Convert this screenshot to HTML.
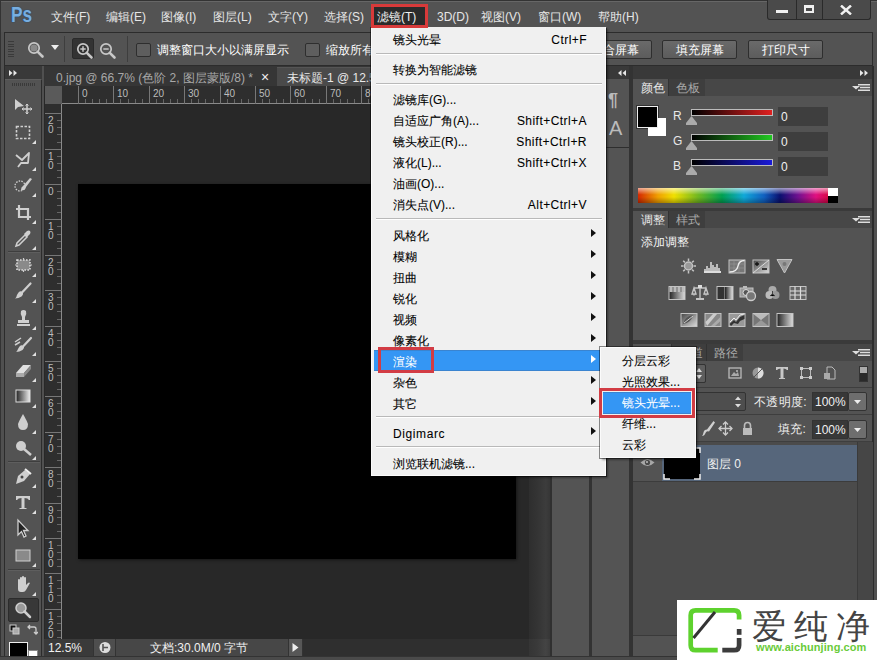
<!DOCTYPE html><html><head><meta charset="utf-8"><style>
*{margin:0;padding:0;box-sizing:border-box}
html,body{width:877px;height:660px;overflow:hidden;background:#3c3c3c}
body{position:relative;font-family:"Liberation Sans",sans-serif;font-size:12px;color:#ddd}
div{position:absolute}
.t{white-space:nowrap;line-height:14px}
.m{color:#1a1a1a;font-size:12px}
</style></head><body><div style="left:0px;top:0px;width:877px;height:660px;background:#505050;border-top:1px solid #333;border-left:1px solid #333"></div>
<div style="left:1px;top:1px;width:876px;height:31px;background:#535353;border-top:1px solid #666"></div>
<div class="t" style="left:11px;top:4px;font-size:22px;font-weight:bold;color:#78aee0;line-height:22px;transform:scaleX(0.78);transform-origin:0 0;text-shadow:0 0 1px #1d4a7a,0 0 1px #1d4a7a">Ps</div>
<div class="t" style="left:51px;top:10px;color:#e6e6e6">文件(F)</div>
<div class="t" style="left:106px;top:10px;color:#e6e6e6">编辑(E)</div>
<div class="t" style="left:161px;top:10px;color:#e6e6e6">图像(I)</div>
<div class="t" style="left:213px;top:10px;color:#e6e6e6">图层(L)</div>
<div class="t" style="left:268px;top:10px;color:#e6e6e6">文字(Y)</div>
<div class="t" style="left:324px;top:10px;color:#e6e6e6">选择(S)</div>
<div class="t" style="left:377px;top:10px;color:#e6e6e6">滤镜(T)</div>
<div class="t" style="left:437px;top:10px;color:#e6e6e6">3D(D)</div>
<div class="t" style="left:481px;top:10px;color:#e6e6e6">视图(V)</div>
<div class="t" style="left:538px;top:10px;color:#e6e6e6">窗口(W)</div>
<div class="t" style="left:598px;top:10px;color:#e6e6e6">帮助(H)</div>
<div style="left:767px;top:0px;width:104px;height:20px;background:#4a4a4a;border:1px solid #2a2a2a;border-top:none;border-radius:0 0 3px 3px"></div>
<div style="left:796px;top:0px;width:1px;height:20px;background:#2a2a2a"></div>
<div style="left:822px;top:0px;width:1px;height:20px;background:#2a2a2a"></div>
<div style="left:776px;top:10px;width:12px;height:3px;background:#f0f0f0"></div>
<div style="left:804px;top:5px;width:10px;height:8px;border:2px solid #f0f0f0;border-top-width:3px"></div>
<svg style="position:absolute;left:840px;top:5px" width="12" height="10" viewBox="0 0 12 10"><path d="M1 0.5L11 9.5M11 0.5L1 9.5" stroke="#f0f0f0" stroke-width="2.4"/></svg>
<div style="left:4px;top:32px;width:869px;height:34px;background:#535353;border:1px solid #2c2c2c"></div>
<div style="left:8px;top:41.0px;width:6px;height:1px;background:#3a3a3a"></div>
<div style="left:8px;top:43.5px;width:6px;height:1px;background:#3a3a3a"></div>
<div style="left:8px;top:46.0px;width:6px;height:1px;background:#3a3a3a"></div>
<div style="left:8px;top:48.5px;width:6px;height:1px;background:#3a3a3a"></div>
<div style="left:8px;top:51.0px;width:6px;height:1px;background:#3a3a3a"></div>
<div style="left:8px;top:53.5px;width:6px;height:1px;background:#3a3a3a"></div>
<div style="left:8px;top:56.0px;width:6px;height:1px;background:#3a3a3a"></div>
<svg style="position:absolute;left:27px;top:41px" width="20" height="20" viewBox="0 0 20 20"><circle cx="7" cy="7" r="5.2" fill="none" stroke="#c8c8c8" stroke-width="1.7"/><line x1="10.8" y1="10.8" x2="15.5" y2="15.5" stroke="#c8c8c8" stroke-width="2.6" stroke-linecap="round"/><circle cx="7" cy="7" r="3.6" fill="#8a8a8a"/></svg>
<svg style="position:absolute;left:51px;top:45px" width="8" height="6"><path d="M0 0H8L4 5Z" fill="#eee"/></svg>
<div style="left:64px;top:36px;width:1px;height:26px;background:#3e3e3e"></div>
<div style="left:72px;top:38px;width:22px;height:21px;background:#333;border:1px solid #2a2a2a;border-radius:2px"></div>
<svg style="position:absolute;left:76px;top:42px" width="20" height="20" viewBox="0 0 20 20"><circle cx="7" cy="7" r="5.2" fill="none" stroke="#c8c8c8" stroke-width="1.7"/><line x1="10.8" y1="10.8" x2="15.5" y2="15.5" stroke="#c8c8c8" stroke-width="2.6" stroke-linecap="round"/><line x1="4.3" y1="7" x2="9.7" y2="7" stroke="#c8c8c8" stroke-width="1.5"/><line x1="7" y1="4.3" x2="7" y2="9.7" stroke="#c8c8c8" stroke-width="1.5"/></svg>
<svg style="position:absolute;left:99px;top:42px" width="20" height="20" viewBox="0 0 20 20"><circle cx="7" cy="7" r="5.2" fill="none" stroke="#c8c8c8" stroke-width="1.7"/><line x1="10.8" y1="10.8" x2="15.5" y2="15.5" stroke="#c8c8c8" stroke-width="2.6" stroke-linecap="round"/><line x1="4.3" y1="7" x2="9.7" y2="7" stroke="#c8c8c8" stroke-width="1.5"/></svg>
<div style="left:127px;top:36px;width:1px;height:26px;background:#3e3e3e"></div>
<div style="left:136px;top:43px;width:15px;height:14px;background:#5e5e5e;border:1px solid #2e2e2e;border-radius:2px"></div>
<div class="t" style="left:157px;top:43px;color:#fff">调整窗口大小以满屏显示</div>
<div style="left:305px;top:43px;width:15px;height:14px;background:#5e5e5e;border:1px solid #2e2e2e;border-radius:2px"></div>
<div class="t" style="left:326px;top:43px;color:#fff">缩放所有窗口</div>
<div style="left:577px;top:40px;width:75px;height:19px;background:linear-gradient(#6a6a6a,#5c5c5c);border:1px solid #2e2e2e;border-radius:2px"></div>
<div class="t" style="left:591px;top:43px;color:#fff">适合屏幕</div>
<div style="left:662px;top:40px;width:75px;height:19px;background:linear-gradient(#6a6a6a,#5c5c5c);border:1px solid #2e2e2e;border-radius:2px"></div>
<div class="t" style="left:676px;top:43px;color:#fff">填充屏幕</div>
<div style="left:748px;top:40px;width:75px;height:19px;background:linear-gradient(#6a6a6a,#5c5c5c);border:1px solid #2e2e2e;border-radius:2px"></div>
<div class="t" style="left:762px;top:43px;color:#fff">打印尺寸</div>
<div style="left:5px;top:66px;width:37px;height:13px;background:#393939"></div>
<svg style="position:absolute;left:9px;top:70px" width="8" height="6" viewBox="0 0 8 6"><path d="M0 0L3.5 3L0 6ZM4.5 0L8 3L4.5 6Z" fill="#e8e8e8"/></svg>
<div style="left:5px;top:79px;width:37px;height:581px;background:#535353;border-right:1px solid #2c2c2c;border-top:1px solid #5e5e5e"></div>
<div style="left:4px;top:66px;width:1px;height:594px;background:#2c2c2c"></div>
<div style="left:12px;top:83px;width:24px;height:3px;background:repeating-linear-gradient(90deg,#3a3a3a 0 1px,transparent 1px 2px)"></div>
<svg style="position:absolute;left:13px;top:96px" width="20" height="20" viewBox="0 0 20 20"><path d="M2 3L2 14L5 11L11 10Z" fill="#cfcfcf"/><path d="M14 8V18M9 13H19" stroke="#cfcfcf" stroke-width="1.5"/><path d="M12.5 9.5L14 8L15.5 9.5M12.5 16.5L14 18L15.5 16.5M10.5 11.5L9 13L10.5 14.5M17.5 11.5L19 13L17.5 14.5" stroke="#cfcfcf" fill="none"/></svg>
<svg style="position:absolute;left:13px;top:122px" width="20" height="20" viewBox="0 0 20 20"><rect x="3.5" y="4.5" width="13" height="12" fill="none" stroke="#cfcfcf" stroke-width="1.6" stroke-dasharray="2.5 1.5"/></svg>
<svg style="position:absolute;left:32px;top:140px" width="4" height="4" viewBox="0 0 4 4"><path d="M4 0V4H0Z" fill="#e0e0e0"/></svg>
<svg style="position:absolute;left:13px;top:149px" width="20" height="20" viewBox="0 0 20 20"><path d="M3 6L9 11L16 4L15 14L8 14L5 18" fill="none" stroke="#cfcfcf" stroke-width="1.8" stroke-linejoin="round"/></svg>
<svg style="position:absolute;left:32px;top:167px" width="4" height="4" viewBox="0 0 4 4"><path d="M4 0V4H0Z" fill="#e0e0e0"/></svg>
<svg style="position:absolute;left:13px;top:175px" width="20" height="20" viewBox="0 0 20 20"><circle cx="7" cy="11" r="5" fill="none" stroke="#cfcfcf" stroke-width="1.3" stroke-dasharray="1.5 1.2"/><path d="M8 15Q12 16 13 12L19 4L17 3L10 11Q8 12 8 15Z" fill="#cfcfcf"/></svg>
<svg style="position:absolute;left:32px;top:193px" width="4" height="4" viewBox="0 0 4 4"><path d="M4 0V4H0Z" fill="#e0e0e0"/></svg>
<svg style="position:absolute;left:13px;top:202px" width="20" height="20" viewBox="0 0 20 20"><path d="M6 3V15H18M3 7H15V18" fill="none" stroke="#cfcfcf" stroke-width="2.2"/></svg>
<svg style="position:absolute;left:32px;top:220px" width="4" height="4" viewBox="0 0 4 4"><path d="M4 0V4H0Z" fill="#e0e0e0"/></svg>
<svg style="position:absolute;left:13px;top:228px" width="20" height="20" viewBox="0 0 20 20"><path d="M3 18L4 15L12 7L14 9L6 17Z" fill="none" stroke="#cfcfcf" stroke-width="1.5"/><path d="M11 6L14 3Q16 2 17 3Q18 4 17 6L14 9Z" fill="#cfcfcf"/></svg>
<svg style="position:absolute;left:32px;top:246px" width="4" height="4" viewBox="0 0 4 4"><path d="M4 0V4H0Z" fill="#e0e0e0"/></svg>
<div style="left:8px;top:251px;width:32px;height:1px;background:#3e3e3e"></div>
<div style="left:8px;top:252px;width:32px;height:1px;background:#5e5e5e"></div>
<svg style="position:absolute;left:13px;top:255px" width="20" height="20" viewBox="0 0 20 20"><rect x="4" y="5" width="13" height="10" rx="2" fill="#8a8a8a"/><path d="M4 5H17V15H4Z" fill="none" stroke="#ddd" stroke-width="1.6" stroke-dasharray="1.6 1.4"/><path d="M2 10H4M17 10H19M10.5 3V5M10.5 15V17" stroke="#ccc" stroke-width="1.2"/></svg>
<svg style="position:absolute;left:32px;top:273px" width="4" height="4" viewBox="0 0 4 4"><path d="M4 0V4H0Z" fill="#e0e0e0"/></svg>
<svg style="position:absolute;left:13px;top:281px" width="20" height="20" viewBox="0 0 20 20"><path d="M17.5 2.5L9.5 11" stroke="#cfcfcf" stroke-width="2.2" stroke-linecap="round"/><path d="M2 17.5Q5.5 17.5 8.5 15.5Q11 13 9.5 11Q7.5 9.5 5.5 11.5Q4 13.5 3.5 15.5Q3 17 2 17.5Z" fill="#cfcfcf"/></svg>
<svg style="position:absolute;left:32px;top:299px" width="4" height="4" viewBox="0 0 4 4"><path d="M4 0V4H0Z" fill="#e0e0e0"/></svg>
<svg style="position:absolute;left:13px;top:308px" width="20" height="20" viewBox="0 0 20 20"><path d="M8 3Q10.5 1 13 3Q14 6 12 9V12H16V15H5V12H9V9Q7 6 8 3Z" fill="#cfcfcf"/><rect x="4" y="16" width="13" height="2" fill="#cfcfcf"/></svg>
<svg style="position:absolute;left:32px;top:326px" width="4" height="4" viewBox="0 0 4 4"><path d="M4 0V4H0Z" fill="#e0e0e0"/></svg>
<svg style="position:absolute;left:13px;top:334px" width="20" height="20" viewBox="0 0 20 20"><path d="M2 8L8 4M2 11L7 8" stroke="#cfcfcf" stroke-width="1.5"/><path d="M18 4L10.5 12" stroke="#cfcfcf" stroke-width="2.2" stroke-linecap="round"/><path d="M3 18Q6.5 18 9.5 16Q12 13.5 10.5 12Q8.5 10.5 6.5 12.5Q5 14.5 4.5 16Q4 17.5 3 18Z" fill="#cfcfcf"/></svg>
<svg style="position:absolute;left:32px;top:352px" width="4" height="4" viewBox="0 0 4 4"><path d="M4 0V4H0Z" fill="#e0e0e0"/></svg>
<svg style="position:absolute;left:13px;top:360px" width="20" height="20" viewBox="0 0 20 20"><path d="M3 13L10 5H18L11 13Z" fill="#e0e0e0"/><path d="M3 13H11V17H3Z" fill="#aaa"/><path d="M11 13L18 5V9L11 17Z" fill="#888"/></svg>
<svg style="position:absolute;left:32px;top:378px" width="4" height="4" viewBox="0 0 4 4"><path d="M4 0V4H0Z" fill="#e0e0e0"/></svg>
<svg style="position:absolute;left:13px;top:386px" width="20" height="20" viewBox="0 0 20 20"><rect x="3" y="4" width="14" height="12" fill="url(#gr)" stroke="#ddd" stroke-width="1"/><defs><linearGradient id="gr"><stop offset="0" stop-color="#222"/><stop offset="1" stop-color="#eee"/></linearGradient></defs></svg>
<svg style="position:absolute;left:32px;top:404px" width="4" height="4" viewBox="0 0 4 4"><path d="M4 0V4H0Z" fill="#e0e0e0"/></svg>
<svg style="position:absolute;left:13px;top:412px" width="20" height="20" viewBox="0 0 20 20"><path d="M10 2Q14 9 15 12Q15 18 10 18Q5 18 5 12Q6 9 10 2Z" fill="#cfcfcf"/></svg>
<svg style="position:absolute;left:32px;top:430px" width="4" height="4" viewBox="0 0 4 4"><path d="M4 0V4H0Z" fill="#e0e0e0"/></svg>
<svg style="position:absolute;left:13px;top:438px" width="20" height="20" viewBox="0 0 20 20"><circle cx="8" cy="8" r="5" fill="#cfcfcf"/><path d="M11 11L18 17" stroke="#cfcfcf" stroke-width="2.5"/></svg>
<svg style="position:absolute;left:32px;top:456px" width="4" height="4" viewBox="0 0 4 4"><path d="M4 0V4H0Z" fill="#e0e0e0"/></svg>
<div style="left:8px;top:461px;width:32px;height:1px;background:#3e3e3e"></div>
<div style="left:8px;top:462px;width:32px;height:1px;background:#5e5e5e"></div>
<svg style="position:absolute;left:13px;top:466px" width="20" height="20" viewBox="0 0 20 20"><path d="M3 18L5 10L12 4L17 8L11 15Z" fill="#cfcfcf"/><circle cx="9" cy="11" r="1.5" fill="#444"/><path d="M12 3L18 8" stroke="#eee" stroke-width="2"/></svg>
<svg style="position:absolute;left:32px;top:484px" width="4" height="4" viewBox="0 0 4 4"><path d="M4 0V4H0Z" fill="#e0e0e0"/></svg>
<svg style="position:absolute;left:13px;top:492px" width="20" height="20" viewBox="0 0 20 20"><path d="M3 4H17V8H16Q15 6 11.5 6V16H13.5V17H6.5V16H8.5V6Q5 6 4 8H3Z" fill="#cfcfcf"/></svg>
<svg style="position:absolute;left:32px;top:510px" width="4" height="4" viewBox="0 0 4 4"><path d="M4 0V4H0Z" fill="#e0e0e0"/></svg>
<svg style="position:absolute;left:13px;top:518px" width="20" height="20" viewBox="0 0 20 20"><path d="M5 2V17L8.5 13.5L11 19L13 18L10.5 12.5H15Z" fill="#222" stroke="#cfcfcf" stroke-width="1.3"/></svg>
<svg style="position:absolute;left:32px;top:536px" width="4" height="4" viewBox="0 0 4 4"><path d="M4 0V4H0Z" fill="#e0e0e0"/></svg>
<svg style="position:absolute;left:13px;top:545px" width="20" height="20" viewBox="0 0 20 20"><rect x="3" y="5" width="14" height="11" fill="#8a8a8a" stroke="#cfcfcf" stroke-width="1"/></svg>
<svg style="position:absolute;left:32px;top:563px" width="4" height="4" viewBox="0 0 4 4"><path d="M4 0V4H0Z" fill="#e0e0e0"/></svg>
<div style="left:8px;top:569px;width:32px;height:1px;background:#3e3e3e"></div>
<div style="left:8px;top:570px;width:32px;height:1px;background:#5e5e5e"></div>
<svg style="position:absolute;left:13px;top:574px" width="20" height="20" viewBox="0 0 20 20"><path d="M5 11V6Q5 5 6 5Q7 5 7 6V10V4Q7 3 8 3Q9 3 9 4V10V3Q9 2 10 2Q11 2 11 3V10V4Q11 3 12 3Q13 3 13 4V11L15 9Q16 8 17 9L13 16Q12 18 10 18H8Q5 18 5 15Z" fill="#cfcfcf"/></svg>
<svg style="position:absolute;left:32px;top:592px" width="4" height="4" viewBox="0 0 4 4"><path d="M4 0V4H0Z" fill="#e0e0e0"/></svg>
<div style="left:8px;top:598px;width:31px;height:24px;background:#383838;border:1px solid #2c2c2c;border-radius:2px"></div>
<svg style="position:absolute;left:13px;top:600px" width="20" height="20" viewBox="0 0 20 20"><circle cx="8" cy="8" r="5" fill="#999" stroke="#cfcfcf" stroke-width="1.5"/><path d="M11.5 11.5L17 17" stroke="#cfcfcf" stroke-width="2.5" stroke-linecap="round"/></svg>
<svg style="position:absolute;left:9px;top:624px" width="12" height="12" viewBox="0 0 12 12"><rect x="1" y="1" width="6" height="6" fill="#111" stroke="#ccc"/><rect x="4" y="4" width="6" height="6" fill="#aaa" stroke="#ccc"/></svg>
<svg style="position:absolute;left:26px;top:624px" width="12" height="12" viewBox="0 0 12 12"><path d="M2 3H8Q10 3 10 5V10M8 8L10 10L12 8M4 1L2 3L4 5" fill="none" stroke="#ccc" stroke-width="1.3"/></svg>
<div style="left:28px;top:650px;width:10px;height:10px;background:#fff;border:1px solid #888"></div>
<div style="left:9px;top:642px;width:19px;height:18px;background:#000;border:1px solid #eee"></div>
<div style="left:44px;top:66px;width:562px;height:594px;background:#282828"></div>
<div style="left:44px;top:66px;width:562px;height:20px;background:#353535"></div>
<div style="left:45px;top:67px;width:232px;height:19px;background:#363636"></div>
<div class="t" style="left:56px;top:71px;color:#a8a8a8">0.jpg @ 66.7% (色阶 2, 图层蒙版/8) *</div>
<div class="t" style="left:261px;top:70px;color:#f0f0f0;font-size:14px">×</div>
<div style="left:277px;top:67px;width:329px;height:19px;background:#4a4a4a;border-top:1px solid #555"></div>
<div class="t" style="left:287px;top:71px;color:#e8e8e8">未标题-1 @ 12.5%</div>
<div style="left:45px;top:86px;width:17px;height:18px;background:#5a5a5a"></div>
<div style="left:62px;top:86px;width:544px;height:18px;background:#2e2e2e;border-bottom:1px solid #8a8a8a"></div>
<div style="left:45px;top:104px;width:17px;height:535px;background:#2e2e2e;border-right:1px solid #8a8a8a"></div>
<div style="left:78px;top:86px;width:1px;height:18px;background:#777"></div>
<div class="t" style="left:82px;top:89px;font-size:10px;color:#bcbcbc;line-height:9px">0</div>
<div style="left:85px;top:99px;width:1px;height:4px;background:#666"></div>
<div style="left:92px;top:99px;width:1px;height:4px;background:#666"></div>
<div style="left:99px;top:99px;width:1px;height:4px;background:#666"></div>
<div style="left:106px;top:99px;width:1px;height:4px;background:#666"></div>
<div style="left:113px;top:86px;width:1px;height:18px;background:#777"></div>
<div class="t" style="left:117px;top:89px;font-size:10px;color:#bcbcbc;line-height:9px">10</div>
<div style="left:120px;top:99px;width:1px;height:4px;background:#666"></div>
<div style="left:128px;top:99px;width:1px;height:4px;background:#666"></div>
<div style="left:135px;top:99px;width:1px;height:4px;background:#666"></div>
<div style="left:142px;top:99px;width:1px;height:4px;background:#666"></div>
<div style="left:149px;top:86px;width:1px;height:18px;background:#777"></div>
<div class="t" style="left:153px;top:89px;font-size:10px;color:#bcbcbc;line-height:9px">20</div>
<div style="left:156px;top:99px;width:1px;height:4px;background:#666"></div>
<div style="left:163px;top:99px;width:1px;height:4px;background:#666"></div>
<div style="left:170px;top:99px;width:1px;height:4px;background:#666"></div>
<div style="left:177px;top:99px;width:1px;height:4px;background:#666"></div>
<div style="left:184px;top:86px;width:1px;height:18px;background:#777"></div>
<div class="t" style="left:188px;top:89px;font-size:10px;color:#bcbcbc;line-height:9px">30</div>
<div style="left:191px;top:99px;width:1px;height:4px;background:#666"></div>
<div style="left:198px;top:99px;width:1px;height:4px;background:#666"></div>
<div style="left:205px;top:99px;width:1px;height:4px;background:#666"></div>
<div style="left:213px;top:99px;width:1px;height:4px;background:#666"></div>
<div style="left:220px;top:86px;width:1px;height:18px;background:#777"></div>
<div class="t" style="left:224px;top:89px;font-size:10px;color:#bcbcbc;line-height:9px">40</div>
<div style="left:227px;top:99px;width:1px;height:4px;background:#666"></div>
<div style="left:234px;top:99px;width:1px;height:4px;background:#666"></div>
<div style="left:241px;top:99px;width:1px;height:4px;background:#666"></div>
<div style="left:248px;top:99px;width:1px;height:4px;background:#666"></div>
<div style="left:255px;top:86px;width:1px;height:18px;background:#777"></div>
<div class="t" style="left:259px;top:89px;font-size:10px;color:#bcbcbc;line-height:9px">50</div>
<div style="left:262px;top:99px;width:1px;height:4px;background:#666"></div>
<div style="left:269px;top:99px;width:1px;height:4px;background:#666"></div>
<div style="left:276px;top:99px;width:1px;height:4px;background:#666"></div>
<div style="left:283px;top:99px;width:1px;height:4px;background:#666"></div>
<div style="left:290px;top:86px;width:1px;height:18px;background:#777"></div>
<div class="t" style="left:294px;top:89px;font-size:10px;color:#bcbcbc;line-height:9px">60</div>
<div style="left:297px;top:99px;width:1px;height:4px;background:#666"></div>
<div style="left:305px;top:99px;width:1px;height:4px;background:#666"></div>
<div style="left:312px;top:99px;width:1px;height:4px;background:#666"></div>
<div style="left:319px;top:99px;width:1px;height:4px;background:#666"></div>
<div style="left:326px;top:86px;width:1px;height:18px;background:#777"></div>
<div class="t" style="left:330px;top:89px;font-size:10px;color:#bcbcbc;line-height:9px">70</div>
<div style="left:333px;top:99px;width:1px;height:4px;background:#666"></div>
<div style="left:340px;top:99px;width:1px;height:4px;background:#666"></div>
<div style="left:347px;top:99px;width:1px;height:4px;background:#666"></div>
<div style="left:354px;top:99px;width:1px;height:4px;background:#666"></div>
<div style="left:361px;top:86px;width:1px;height:18px;background:#777"></div>
<div class="t" style="left:365px;top:89px;font-size:10px;color:#bcbcbc;line-height:9px">80</div>
<div style="left:368px;top:99px;width:1px;height:4px;background:#666"></div>
<div style="left:375px;top:99px;width:1px;height:4px;background:#666"></div>
<div style="left:382px;top:99px;width:1px;height:4px;background:#666"></div>
<div style="left:390px;top:99px;width:1px;height:4px;background:#666"></div>
<div style="left:397px;top:86px;width:1px;height:18px;background:#777"></div>
<div class="t" style="left:401px;top:89px;font-size:10px;color:#bcbcbc;line-height:9px">90</div>
<div style="left:404px;top:99px;width:1px;height:4px;background:#666"></div>
<div style="left:411px;top:99px;width:1px;height:4px;background:#666"></div>
<div style="left:418px;top:99px;width:1px;height:4px;background:#666"></div>
<div style="left:425px;top:99px;width:1px;height:4px;background:#666"></div>
<div style="left:432px;top:86px;width:1px;height:18px;background:#777"></div>
<div class="t" style="left:436px;top:89px;font-size:10px;color:#bcbcbc;line-height:9px">100</div>
<div style="left:439px;top:99px;width:1px;height:4px;background:#666"></div>
<div style="left:446px;top:99px;width:1px;height:4px;background:#666"></div>
<div style="left:453px;top:99px;width:1px;height:4px;background:#666"></div>
<div style="left:460px;top:99px;width:1px;height:4px;background:#666"></div>
<div style="left:467px;top:86px;width:1px;height:18px;background:#777"></div>
<div class="t" style="left:471px;top:89px;font-size:10px;color:#bcbcbc;line-height:9px">110</div>
<div style="left:474px;top:99px;width:1px;height:4px;background:#666"></div>
<div style="left:482px;top:99px;width:1px;height:4px;background:#666"></div>
<div style="left:489px;top:99px;width:1px;height:4px;background:#666"></div>
<div style="left:496px;top:99px;width:1px;height:4px;background:#666"></div>
<div style="left:503px;top:86px;width:1px;height:18px;background:#777"></div>
<div class="t" style="left:507px;top:89px;font-size:10px;color:#bcbcbc;line-height:9px">120</div>
<div style="left:510px;top:99px;width:1px;height:4px;background:#666"></div>
<div style="left:517px;top:99px;width:1px;height:4px;background:#666"></div>
<div style="left:524px;top:99px;width:1px;height:4px;background:#666"></div>
<div style="left:531px;top:99px;width:1px;height:4px;background:#666"></div>
<div style="left:538px;top:86px;width:1px;height:18px;background:#777"></div>
<div class="t" style="left:542px;top:89px;font-size:10px;color:#bcbcbc;line-height:9px">130</div>
<div style="left:545px;top:99px;width:1px;height:4px;background:#666"></div>
<div style="left:552px;top:99px;width:1px;height:4px;background:#666"></div>
<div style="left:559px;top:99px;width:1px;height:4px;background:#666"></div>
<div style="left:567px;top:99px;width:1px;height:4px;background:#666"></div>
<div style="left:574px;top:86px;width:1px;height:18px;background:#777"></div>
<div class="t" style="left:578px;top:89px;font-size:10px;color:#bcbcbc;line-height:9px">140</div>
<div style="left:581px;top:99px;width:1px;height:4px;background:#666"></div>
<div style="left:588px;top:99px;width:1px;height:4px;background:#666"></div>
<div style="left:595px;top:99px;width:1px;height:4px;background:#666"></div>
<div style="left:602px;top:99px;width:1px;height:4px;background:#666"></div>
<div style="left:45px;top:113px;width:17px;height:1px;background:#777"></div>
<div class="t" style="left:48px;top:116px;font-size:10px;color:#bcbcbc;line-height:9px">2<br>0</div>
<div style="left:57px;top:120px;width:4px;height:1px;background:#666"></div>
<div style="left:57px;top:127px;width:4px;height:1px;background:#666"></div>
<div style="left:57px;top:134px;width:4px;height:1px;background:#666"></div>
<div style="left:57px;top:142px;width:4px;height:1px;background:#666"></div>
<div style="left:45px;top:149px;width:17px;height:1px;background:#777"></div>
<div class="t" style="left:48px;top:152px;font-size:10px;color:#bcbcbc;line-height:9px">1<br>0</div>
<div style="left:57px;top:156px;width:4px;height:1px;background:#666"></div>
<div style="left:57px;top:163px;width:4px;height:1px;background:#666"></div>
<div style="left:57px;top:170px;width:4px;height:1px;background:#666"></div>
<div style="left:57px;top:177px;width:4px;height:1px;background:#666"></div>
<div style="left:45px;top:184px;width:17px;height:1px;background:#777"></div>
<div class="t" style="left:48px;top:187px;font-size:10px;color:#bcbcbc;line-height:9px">0</div>
<div style="left:57px;top:191px;width:4px;height:1px;background:#666"></div>
<div style="left:57px;top:198px;width:4px;height:1px;background:#666"></div>
<div style="left:57px;top:205px;width:4px;height:1px;background:#666"></div>
<div style="left:57px;top:212px;width:4px;height:1px;background:#666"></div>
<div style="left:45px;top:219px;width:17px;height:1px;background:#777"></div>
<div class="t" style="left:48px;top:222px;font-size:10px;color:#bcbcbc;line-height:9px">1<br>0</div>
<div style="left:57px;top:226px;width:4px;height:1px;background:#666"></div>
<div style="left:57px;top:234px;width:4px;height:1px;background:#666"></div>
<div style="left:57px;top:241px;width:4px;height:1px;background:#666"></div>
<div style="left:57px;top:248px;width:4px;height:1px;background:#666"></div>
<div style="left:45px;top:255px;width:17px;height:1px;background:#777"></div>
<div class="t" style="left:48px;top:258px;font-size:10px;color:#bcbcbc;line-height:9px">2<br>0</div>
<div style="left:57px;top:262px;width:4px;height:1px;background:#666"></div>
<div style="left:57px;top:269px;width:4px;height:1px;background:#666"></div>
<div style="left:57px;top:276px;width:4px;height:1px;background:#666"></div>
<div style="left:57px;top:283px;width:4px;height:1px;background:#666"></div>
<div style="left:45px;top:290px;width:17px;height:1px;background:#777"></div>
<div class="t" style="left:48px;top:293px;font-size:10px;color:#bcbcbc;line-height:9px">3<br>0</div>
<div style="left:57px;top:297px;width:4px;height:1px;background:#666"></div>
<div style="left:57px;top:304px;width:4px;height:1px;background:#666"></div>
<div style="left:57px;top:311px;width:4px;height:1px;background:#666"></div>
<div style="left:57px;top:319px;width:4px;height:1px;background:#666"></div>
<div style="left:45px;top:326px;width:17px;height:1px;background:#777"></div>
<div class="t" style="left:48px;top:329px;font-size:10px;color:#bcbcbc;line-height:9px">4<br>0</div>
<div style="left:57px;top:333px;width:4px;height:1px;background:#666"></div>
<div style="left:57px;top:340px;width:4px;height:1px;background:#666"></div>
<div style="left:57px;top:347px;width:4px;height:1px;background:#666"></div>
<div style="left:57px;top:354px;width:4px;height:1px;background:#666"></div>
<div style="left:45px;top:361px;width:17px;height:1px;background:#777"></div>
<div class="t" style="left:48px;top:364px;font-size:10px;color:#bcbcbc;line-height:9px">5<br>0</div>
<div style="left:57px;top:368px;width:4px;height:1px;background:#666"></div>
<div style="left:57px;top:375px;width:4px;height:1px;background:#666"></div>
<div style="left:57px;top:382px;width:4px;height:1px;background:#666"></div>
<div style="left:57px;top:389px;width:4px;height:1px;background:#666"></div>
<div style="left:45px;top:396px;width:17px;height:1px;background:#777"></div>
<div class="t" style="left:48px;top:399px;font-size:10px;color:#bcbcbc;line-height:9px">6<br>0</div>
<div style="left:57px;top:403px;width:4px;height:1px;background:#666"></div>
<div style="left:57px;top:411px;width:4px;height:1px;background:#666"></div>
<div style="left:57px;top:418px;width:4px;height:1px;background:#666"></div>
<div style="left:57px;top:425px;width:4px;height:1px;background:#666"></div>
<div style="left:45px;top:432px;width:17px;height:1px;background:#777"></div>
<div class="t" style="left:48px;top:435px;font-size:10px;color:#bcbcbc;line-height:9px">7<br>0</div>
<div style="left:57px;top:439px;width:4px;height:1px;background:#666"></div>
<div style="left:57px;top:446px;width:4px;height:1px;background:#666"></div>
<div style="left:57px;top:453px;width:4px;height:1px;background:#666"></div>
<div style="left:57px;top:460px;width:4px;height:1px;background:#666"></div>
<div style="left:45px;top:467px;width:17px;height:1px;background:#777"></div>
<div class="t" style="left:48px;top:470px;font-size:10px;color:#bcbcbc;line-height:9px">8<br>0</div>
<div style="left:57px;top:474px;width:4px;height:1px;background:#666"></div>
<div style="left:57px;top:481px;width:4px;height:1px;background:#666"></div>
<div style="left:57px;top:488px;width:4px;height:1px;background:#666"></div>
<div style="left:57px;top:496px;width:4px;height:1px;background:#666"></div>
<div style="left:45px;top:503px;width:17px;height:1px;background:#777"></div>
<div class="t" style="left:48px;top:506px;font-size:10px;color:#bcbcbc;line-height:9px">9<br>0</div>
<div style="left:57px;top:510px;width:4px;height:1px;background:#666"></div>
<div style="left:57px;top:517px;width:4px;height:1px;background:#666"></div>
<div style="left:57px;top:524px;width:4px;height:1px;background:#666"></div>
<div style="left:57px;top:531px;width:4px;height:1px;background:#666"></div>
<div style="left:45px;top:538px;width:17px;height:1px;background:#777"></div>
<div class="t" style="left:48px;top:541px;font-size:10px;color:#bcbcbc;line-height:9px">1<br>0<br>0</div>
<div style="left:57px;top:545px;width:4px;height:1px;background:#666"></div>
<div style="left:57px;top:552px;width:4px;height:1px;background:#666"></div>
<div style="left:57px;top:559px;width:4px;height:1px;background:#666"></div>
<div style="left:57px;top:566px;width:4px;height:1px;background:#666"></div>
<div style="left:45px;top:573px;width:17px;height:1px;background:#777"></div>
<div class="t" style="left:48px;top:576px;font-size:10px;color:#bcbcbc;line-height:9px">1<br>1<br>0</div>
<div style="left:57px;top:580px;width:4px;height:1px;background:#666"></div>
<div style="left:57px;top:588px;width:4px;height:1px;background:#666"></div>
<div style="left:57px;top:595px;width:4px;height:1px;background:#666"></div>
<div style="left:57px;top:602px;width:4px;height:1px;background:#666"></div>
<div style="left:45px;top:609px;width:17px;height:1px;background:#777"></div>
<div class="t" style="left:48px;top:612px;font-size:10px;color:#bcbcbc;line-height:9px">1<br>2<br>0</div>
<div style="left:57px;top:616px;width:4px;height:1px;background:#666"></div>
<div style="left:57px;top:623px;width:4px;height:1px;background:#666"></div>
<div style="left:57px;top:630px;width:4px;height:1px;background:#666"></div>
<div style="left:57px;top:637px;width:4px;height:1px;background:#666"></div>
<div style="left:78px;top:184px;width:438px;height:375px;background:#000;box-shadow:1px 1px 3px rgba(0,0,0,.5)"></div>
<div style="left:529px;top:104px;width:21px;height:552px;background:linear-gradient(90deg,#2e2e2e,#343434 40%,#3c3c3c 80%,#363636)"></div>
<div style="left:44px;top:639px;width:486px;height:17px;background:#2f2f2f"></div>
<div style="left:529px;top:639px;width:21px;height:17px;background:linear-gradient(90deg,#353535,#3a3a3a 40%,#444 80%,#3c3c3c)"></div>
<div style="left:44px;top:639px;width:49px;height:17px;background:#3a3a3a"></div>
<div class="t" style="left:48px;top:641px;color:#f0f0f0">12.5%</div>
<div style="left:93px;top:639px;width:23px;height:17px;background:#4e4e4e;border-left:1px solid #333;border-right:1px solid #333"></div>
<svg style="position:absolute;left:98px;top:641px" width="14" height="13" viewBox="0 0 14 13"><circle cx="7" cy="6.5" r="5.5" fill="#ddd"/><path d="M5 3V10M5 6.5H10" stroke="#555" stroke-width="1.6"/></svg>
<div style="left:116px;top:639px;width:172px;height:17px;background:#474747"></div>
<div class="t" style="left:150px;top:641px;color:#f0f0f0">文档:30.0M/0 字节</div>
<div style="left:288px;top:639px;width:15px;height:17px;background:#575757;border-left:1px solid #333;border-right:1px solid #333"></div>
<svg style="position:absolute;left:292px;top:643px" width="7" height="9" viewBox="0 0 7 9"><path d="M0.5 0L6.5 4.5L0.5 9Z" fill="#eee"/></svg>
<div style="left:550px;top:66px;width:2px;height:594px;background:#303030"></div>
<div style="left:552px;top:66px;width:37px;height:594px;background:#545454"></div>
<div style="left:589px;top:66px;width:3px;height:594px;background:#333"></div>
<div style="left:592px;top:66px;width:37px;height:594px;background:#545454"></div>
<div style="left:552px;top:66px;width:77px;height:13px;background:#393939"></div>
<svg style="position:absolute;left:618px;top:70px" width="8" height="6" viewBox="0 0 8 6"><path d="M3.5 0L0 3L3.5 6ZM8 0L4.5 3L8 6Z" fill="#e8e8e8"/></svg>
<div style="left:592px;top:147px;width:37px;height:1px;background:#2e2e2e"></div>
<div class="t" style="left:608px;top:91px;font-size:18px;color:#bbb;font-weight:bold;line-height:18px">¶</div>
<div class="t" style="left:609px;top:118px;font-size:20px;color:#bbb;line-height:20px">A</div>
<div style="left:629px;top:66px;width:4px;height:594px;background:#333"></div>
<div style="left:633px;top:66px;width:239px;height:590px;background:#3c3c3c"></div>
<div style="left:872px;top:66px;width:2px;height:590px;background:#2c2c2c"></div>
<div style="left:633px;top:66px;width:239px;height:13px;background:#393939"></div>
<svg style="position:absolute;left:860px;top:70px" width="8" height="6" viewBox="0 0 8 6"><path d="M0 0L3.5 3L0 6ZM4.5 0L8 3L4.5 6Z" fill="#e8e8e8"/></svg>
<div style="left:633px;top:79px;width:239px;height:17px;background:#474747"></div>
<div style="left:633px;top:79px;width:35px;height:17px;background:#535353"></div>
<div class="t" style="left:641px;top:81px;color:#e8e8e8">颜色</div>
<div style="left:668px;top:79px;width:37px;height:17px;background:#3e3e3e;border-left:1px solid #333"></div>
<div class="t" style="left:676px;top:81px;color:#aaa">色板</div>
<svg style="position:absolute;left:852px;top:84px" width="18" height="7" viewBox="0 0 18 7"><path d="M0 2H8L4 5.5Z" fill="#ddd"/><path d="M6 0.75H18M8 3.5H18M6 6.25H18" stroke="#ddd" stroke-width="1.3"/></svg>
<div style="left:633px;top:96px;width:239px;height:112px;background:#535353"></div>
<div style="left:637px;top:106px;width:21px;height:22px;background:#000;border:1px solid #eee;box-shadow:0 0 0 1px #333"></div>
<div style="left:648px;top:118px;width:18px;height:18px;background:#fff"></div>
<div style="left:637px;top:106px;width:21px;height:22px;background:#000;border:1px solid #eee"></div>
<div class="t" style="left:673px;top:109px;color:#e8e8e8">R</div>
<div style="left:691px;top:109px;width:82px;height:7px;background:linear-gradient(90deg,#000,#e02020);border:1px solid #bbb"></div>
<svg style="position:absolute;left:686px;top:116px" width="11" height="9"><path d="M5.5 0L11 7V9H0V7Z" fill="#aaa"/></svg>
<div style="left:778px;top:107px;width:50px;height:19px;background:#3e3e3e"></div>
<div class="t" style="left:781px;top:110px;color:#f0f0f0">0</div>
<div class="t" style="left:673px;top:134px;color:#e8e8e8">G</div>
<div style="left:691px;top:134px;width:82px;height:7px;background:linear-gradient(90deg,#000,#22c822);border:1px solid #bbb"></div>
<svg style="position:absolute;left:686px;top:141px" width="11" height="9"><path d="M5.5 0L11 7V9H0V7Z" fill="#aaa"/></svg>
<div style="left:778px;top:132px;width:50px;height:19px;background:#3e3e3e"></div>
<div class="t" style="left:781px;top:135px;color:#f0f0f0">0</div>
<div class="t" style="left:673px;top:159px;color:#e8e8e8">B</div>
<div style="left:691px;top:159px;width:82px;height:7px;background:linear-gradient(90deg,#000,#1a1ad8);border:1px solid #bbb"></div>
<svg style="position:absolute;left:686px;top:166px" width="11" height="9"><path d="M5.5 0L11 7V9H0V7Z" fill="#aaa"/></svg>
<div style="left:778px;top:157px;width:50px;height:19px;background:#3e3e3e"></div>
<div class="t" style="left:781px;top:160px;color:#f0f0f0">0</div>
<div style="left:638px;top:188px;width:200px;height:15px;background:linear-gradient(90deg,#d42800 0%,#f0a000 10%,#f0e000 18%,#70b820 30%,#00a050 42%,#10a8d8 53%,#1060c0 63%,#0a1070 71%,#701090 80%,#e01080 89%,#d00018 100%)"></div>
<div style="left:638px;top:188px;width:200px;height:15px;background:linear-gradient(180deg,rgba(255,255,255,0.6),rgba(255,255,255,0) 45%,rgba(0,0,0,0) 60%,rgba(0,0,0,0.3))"></div>
<div style="left:828px;top:188px;width:10px;height:8px;background:#fff"></div>
<div style="left:828px;top:196px;width:10px;height:7px;background:#000"></div>
<div style="left:633px;top:208px;width:239px;height:3px;background:#3a3a3a"></div>
<div style="left:633px;top:211px;width:239px;height:17px;background:#474747"></div>
<div style="left:633px;top:211px;width:35px;height:17px;background:#535353"></div>
<div class="t" style="left:641px;top:213px;color:#e8e8e8">调整</div>
<div style="left:668px;top:211px;width:37px;height:17px;background:#3e3e3e;border-left:1px solid #333"></div>
<div class="t" style="left:676px;top:213px;color:#aaa">样式</div>
<svg style="position:absolute;left:852px;top:216px" width="18" height="7" viewBox="0 0 18 7"><path d="M0 2H8L4 5.5Z" fill="#ddd"/><path d="M6 0.75H18M8 3.5H18M6 6.25H18" stroke="#ddd" stroke-width="1.3"/></svg>
<div style="left:633px;top:228px;width:239px;height:112px;background:#535353"></div>
<div class="t" style="left:641px;top:235px;color:#f4f4f4;font-size:12px;line-height:15px">添加调整</div>
<svg style="position:absolute;left:680px;top:258px" width="18" height="16" viewBox="0 0 18 16"><defs><linearGradient id="g1" x1="0" y1="0" x2="1" y2="1"><stop offset="0" stop-color="#444"/><stop offset="1" stop-color="#ddd"/></linearGradient><linearGradient id="g2" x1="0" x2="1"><stop offset="0" stop-color="#222"/><stop offset="1" stop-color="#ddd"/></linearGradient></defs><circle cx="8.5" cy="8" r="4" fill="#999" stroke="#c4c4c4" stroke-width="1.5"/><path d="M8.5 0.5V3M8.5 13V15.5M1 8H3.5M13.5 8H16M3.2 2.7L4.9 4.4M12.1 11.6L13.8 13.3M3.2 13.3L4.9 11.6M12.1 4.4L13.8 2.7" stroke="#c4c4c4" stroke-width="1.5"/></svg>
<svg style="position:absolute;left:703px;top:258px" width="19" height="16" viewBox="0 0 19 16"><defs><linearGradient id="g1" x1="0" y1="0" x2="1" y2="1"><stop offset="0" stop-color="#444"/><stop offset="1" stop-color="#ddd"/></linearGradient><linearGradient id="g2" x1="0" x2="1"><stop offset="0" stop-color="#222"/><stop offset="1" stop-color="#ddd"/></linearGradient></defs><path d="M1 14V11H3V8H5V10H7V4H9V7H11V9H13V6H15V10H17V14Z" fill="#bbb"/><rect x="1" y="13" width="17" height="2" fill="#ddd"/></svg>
<svg style="position:absolute;left:728px;top:258px" width="18" height="16" viewBox="0 0 18 16"><defs><linearGradient id="g1" x1="0" y1="0" x2="1" y2="1"><stop offset="0" stop-color="#444"/><stop offset="1" stop-color="#ddd"/></linearGradient><linearGradient id="g2" x1="0" x2="1"><stop offset="0" stop-color="#222"/><stop offset="1" stop-color="#ddd"/></linearGradient></defs><rect x="1" y="2" width="16" height="13" fill="#777" stroke="#c4c4c4"/><path d="M1 6H17M1 10H17M6 2V15M11 2V15" stroke="#999" stroke-width="0.6"/><path d="M1.5 14Q9 14 10 8Q11 2.5 16.5 2.5" fill="none" stroke="#eee" stroke-width="1.4"/></svg>
<svg style="position:absolute;left:752px;top:258px" width="18" height="16" viewBox="0 0 18 16"><defs><linearGradient id="g1" x1="0" y1="0" x2="1" y2="1"><stop offset="0" stop-color="#444"/><stop offset="1" stop-color="#ddd"/></linearGradient><linearGradient id="g2" x1="0" x2="1"><stop offset="0" stop-color="#222"/><stop offset="1" stop-color="#ddd"/></linearGradient></defs><rect x="1" y="2" width="16" height="13" fill="url(#g1)" stroke="#c4c4c4"/><path d="M1 15L17 2" stroke="#ddd"/><path d="M3 6H7M5 4V8M10 11H15" stroke="#111" stroke-width="1.3"/></svg>
<svg style="position:absolute;left:776px;top:258px" width="18" height="16" viewBox="0 0 18 16"><defs><linearGradient id="g1" x1="0" y1="0" x2="1" y2="1"><stop offset="0" stop-color="#444"/><stop offset="1" stop-color="#ddd"/></linearGradient><linearGradient id="g2" x1="0" x2="1"><stop offset="0" stop-color="#222"/><stop offset="1" stop-color="#ddd"/></linearGradient></defs><path d="M1 1.5H16L8.5 15Z" fill="#9a9a9a" stroke="#c4c4c4"/><circle cx="8.5" cy="6" r="2" fill="#777"/></svg>
<svg style="position:absolute;left:668px;top:285px" width="18" height="16" viewBox="0 0 18 16"><defs><linearGradient id="g1" x1="0" y1="0" x2="1" y2="1"><stop offset="0" stop-color="#444"/><stop offset="1" stop-color="#ddd"/></linearGradient><linearGradient id="g2" x1="0" x2="1"><stop offset="0" stop-color="#222"/><stop offset="1" stop-color="#ddd"/></linearGradient></defs><rect x="1" y="1.5" width="16" height="13" fill="url(#g2)" stroke="#c4c4c4"/><rect x="1.5" y="2" width="15" height="5" fill="#bbb"/><path d="M5 2V7M9 2V7M13 2V7" stroke="#777" stroke-width="1.2"/></svg>
<svg style="position:absolute;left:691px;top:285px" width="18" height="16" viewBox="0 0 18 16"><defs><linearGradient id="g1" x1="0" y1="0" x2="1" y2="1"><stop offset="0" stop-color="#444"/><stop offset="1" stop-color="#ddd"/></linearGradient><linearGradient id="g2" x1="0" x2="1"><stop offset="0" stop-color="#222"/><stop offset="1" stop-color="#ddd"/></linearGradient></defs><path d="M9 1V14M3 3H15M3 3L1 9H5ZM15 3L13 9H17Z" fill="none" stroke="#c4c4c4" stroke-width="1.4"/><path d="M1 9Q3 12 5 9ZM13 9Q15 12 17 9Z" fill="#bbb"/><rect x="5" y="13" width="8" height="2" fill="#c4c4c4"/><rect x="7" y="0" width="4" height="3" fill="#ddd"/></svg>
<svg style="position:absolute;left:716px;top:285px" width="18" height="16" viewBox="0 0 18 16"><defs><linearGradient id="g1" x1="0" y1="0" x2="1" y2="1"><stop offset="0" stop-color="#444"/><stop offset="1" stop-color="#ddd"/></linearGradient><linearGradient id="g2" x1="0" x2="1"><stop offset="0" stop-color="#222"/><stop offset="1" stop-color="#ddd"/></linearGradient></defs><rect x="1" y="1.5" width="16" height="13" fill="#bbb" stroke="#c4c4c4"/><rect x="1.5" y="2" width="7" height="12" fill="#333"/><rect x="9" y="2" width="7.5" height="12" fill="url(#g2)"/></svg>
<svg style="position:absolute;left:739px;top:285px" width="18" height="17" viewBox="0 0 18 17"><defs><linearGradient id="g1" x1="0" y1="0" x2="1" y2="1"><stop offset="0" stop-color="#444"/><stop offset="1" stop-color="#ddd"/></linearGradient><linearGradient id="g2" x1="0" x2="1"><stop offset="0" stop-color="#222"/><stop offset="1" stop-color="#ddd"/></linearGradient></defs><rect x="1" y="3" width="13" height="9" fill="#999" stroke="#c4c4c4"/><rect x="4" y="1" width="4" height="2" fill="#bbb"/><circle cx="7" cy="7.5" r="3" fill="#555" stroke="#ddd"/><circle cx="12" cy="11" r="4.5" fill="#777" stroke="#ccc" stroke-width="1.3"/></svg>
<svg style="position:absolute;left:764px;top:285px" width="18" height="16" viewBox="0 0 18 16"><defs><linearGradient id="g1" x1="0" y1="0" x2="1" y2="1"><stop offset="0" stop-color="#444"/><stop offset="1" stop-color="#ddd"/></linearGradient><linearGradient id="g2" x1="0" x2="1"><stop offset="0" stop-color="#222"/><stop offset="1" stop-color="#ddd"/></linearGradient></defs><circle cx="8.5" cy="5" r="4" fill="#aaa"/><circle cx="5.5" cy="10" r="4" fill="#bbb"/><circle cx="11.5" cy="10" r="4" fill="#999"/><path d="M8.5 6V9M6 11L8.5 9L11 11" stroke="#444" stroke-width="1"/></svg>
<svg style="position:absolute;left:789px;top:285px" width="18" height="16" viewBox="0 0 18 16"><defs><linearGradient id="g1" x1="0" y1="0" x2="1" y2="1"><stop offset="0" stop-color="#444"/><stop offset="1" stop-color="#ddd"/></linearGradient><linearGradient id="g2" x1="0" x2="1"><stop offset="0" stop-color="#222"/><stop offset="1" stop-color="#ddd"/></linearGradient></defs><rect x="1" y="1.5" width="16" height="13" fill="#666" stroke="#c4c4c4"/><path d="M1 6H17M1 10H17M6 1.5V14.5M11.5 1.5V14.5" stroke="#ddd" stroke-width="1.2"/></svg>
<svg style="position:absolute;left:680px;top:312px" width="18" height="16" viewBox="0 0 18 16"><defs><linearGradient id="g1" x1="0" y1="0" x2="1" y2="1"><stop offset="0" stop-color="#444"/><stop offset="1" stop-color="#ddd"/></linearGradient><linearGradient id="g2" x1="0" x2="1"><stop offset="0" stop-color="#222"/><stop offset="1" stop-color="#ddd"/></linearGradient></defs><rect x="1" y="1.5" width="16" height="13" fill="url(#g1)" stroke="#c4c4c4"/><path d="M3 12Q5 4 13 3Q11 11 3 12Z" fill="#555"/><path d="M4 11L13 4" stroke="#ccc"/></svg>
<svg style="position:absolute;left:704px;top:312px" width="18" height="16" viewBox="0 0 18 16"><defs><linearGradient id="g1" x1="0" y1="0" x2="1" y2="1"><stop offset="0" stop-color="#444"/><stop offset="1" stop-color="#ddd"/></linearGradient><linearGradient id="g2" x1="0" x2="1"><stop offset="0" stop-color="#222"/><stop offset="1" stop-color="#ddd"/></linearGradient></defs><rect x="1" y="1.5" width="16" height="13" fill="#888" stroke="#c4c4c4"/><path d="M1.5 10L9 2H13L3 14Z" fill="#ccc"/><path d="M7 14L16.5 5V9L11 14Z" fill="#aaa"/></svg>
<svg style="position:absolute;left:728px;top:312px" width="18" height="16" viewBox="0 0 18 16"><defs><linearGradient id="g1" x1="0" y1="0" x2="1" y2="1"><stop offset="0" stop-color="#444"/><stop offset="1" stop-color="#ddd"/></linearGradient><linearGradient id="g2" x1="0" x2="1"><stop offset="0" stop-color="#222"/><stop offset="1" stop-color="#ddd"/></linearGradient></defs><rect x="1" y="1.5" width="16" height="13" fill="#999" stroke="#c4c4c4"/><path d="M1.5 12L6 8L8 10L12 5L16.5 3V7L12 9L10 12L6 11L3 14Z" fill="#333"/><path d="M2 10L6 6L8 8L12 3L16 2" stroke="#eee" fill="none"/></svg>
<svg style="position:absolute;left:752px;top:312px" width="18" height="16" viewBox="0 0 18 16"><defs><linearGradient id="g1" x1="0" y1="0" x2="1" y2="1"><stop offset="0" stop-color="#444"/><stop offset="1" stop-color="#ddd"/></linearGradient><linearGradient id="g2" x1="0" x2="1"><stop offset="0" stop-color="#222"/><stop offset="1" stop-color="#ddd"/></linearGradient></defs><rect x="1" y="1.5" width="16" height="13" fill="#999" stroke="#c4c4c4"/><path d="M1.5 2L9 8L1.5 14ZM16.5 2L9 8L16.5 14Z" fill="#777"/><path d="M1.5 2L9 8L16.5 2Z" fill="#bbb"/></svg>
<svg style="position:absolute;left:776px;top:312px" width="18" height="16" viewBox="0 0 18 16"><defs><linearGradient id="g1" x1="0" y1="0" x2="1" y2="1"><stop offset="0" stop-color="#444"/><stop offset="1" stop-color="#ddd"/></linearGradient><linearGradient id="g2" x1="0" x2="1"><stop offset="0" stop-color="#222"/><stop offset="1" stop-color="#ddd"/></linearGradient></defs><rect x="1" y="1.5" width="16" height="13" fill="url(#g2)" stroke="#c4c4c4"/></svg>
<div style="left:633px;top:340px;width:239px;height:4px;background:#3a3a3a"></div>
<div style="left:633px;top:344px;width:239px;height:17px;background:#474747"></div>
<div style="left:633px;top:344px;width:38px;height:17px;background:#535353"></div>
<div class="t" style="left:641px;top:346px;color:#e8e8e8">图层</div>
<div style="left:671px;top:344px;width:35px;height:17px;background:#3e3e3e;border-left:1px solid #333"></div>
<div class="t" style="left:679px;top:346px;color:#aaa">通道</div>
<div style="left:706px;top:344px;width:37px;height:17px;background:#3e3e3e;border-left:1px solid #333"></div>
<div class="t" style="left:714px;top:346px;color:#aaa">路径</div>
<svg style="position:absolute;left:852px;top:349px" width="18" height="7" viewBox="0 0 18 7"><path d="M0 2H8L4 5.5Z" fill="#ddd"/><path d="M6 0.75H18M8 3.5H18M6 6.25H18" stroke="#ddd" stroke-width="1.3"/></svg>
<div style="left:633px;top:361px;width:239px;height:82px;background:#535353"></div>
<div style="left:633px;top:387px;width:239px;height:1px;background:#3e3e3e"></div>
<div style="left:633px;top:414px;width:239px;height:1px;background:#3e3e3e"></div>
<div style="left:633px;top:441px;width:239px;height:1px;background:#3e3e3e"></div>
<div style="left:640px;top:364px;width:66px;height:19px;background:#4a4a4a;border:1px solid #333;border-radius:2px"></div>
<div style="left:692px;top:364px;width:14px;height:19px;background:#5e5e5e;border:1px solid #333;border-radius:2px"></div>
<svg style="position:absolute;left:695px;top:367px" width="8" height="13" viewBox="0 0 8 13"><path d="M4 1L7 5H1ZM4 12L7 8H1Z" fill="#ddd"/></svg>
<svg style="position:absolute;left:728px;top:366px" width="14" height="14" viewBox="0 0 14 14"><rect x="1" y="2" width="12" height="10" fill="none" stroke="#bbb" stroke-width="1.3"/><path d="M3 10L6 6L8 8L10 6L11 10Z" fill="#aaa"/><circle cx="9" cy="5" r="1" fill="#bbb"/></svg>
<svg style="position:absolute;left:751px;top:366px" width="14" height="14" viewBox="0 0 14 14"><circle cx="7" cy="7" r="5.5" fill="#999"/><path d="M7 1.5A5.5 5.5 0 0 1 7 12.5Z" fill="#ddd"/><path d="M3 11L11 3" stroke="#555" stroke-width="1"/></svg>
<svg style="position:absolute;left:775px;top:366px" width="14" height="14" viewBox="0 0 14 14"><path d="M1 1H13V4H12Q11 2.5 8.5 2.5V12H10V13H4V12H5.5V2.5Q3 2.5 2 4H1Z" fill="#c8c8c8"/></svg>
<svg style="position:absolute;left:799px;top:366px" width="14" height="14" viewBox="0 0 14 14"><rect x="2.5" y="2.5" width="9" height="9" fill="none" stroke="#bbb"/><rect x="1" y="1" width="3" height="3" fill="#ccc"/><rect x="10" y="1" width="3" height="3" fill="#ccc"/><rect x="1" y="10" width="3" height="3" fill="#ccc"/><rect x="10" y="10" width="3" height="3" fill="#ccc"/></svg>
<svg style="position:absolute;left:823px;top:366px" width="14" height="14" viewBox="0 0 14 14"><path d="M4 1H9L12 4V13H4Z" fill="none" stroke="#bbb"/><rect x="1" y="7" width="6" height="6" fill="#aaa"/></svg>
<div style="left:859px;top:366px;width:9px;height:16px;background:linear-gradient(180deg,#aaa 0 45%,#2a2a2a 45%);border:1px solid #333"></div>
<div style="left:640px;top:392px;width:106px;height:19px;background:#4e4e4e;border:1px solid #333;border-radius:2px"></div>
<svg style="position:absolute;left:734px;top:396px" width="8" height="12" viewBox="0 0 8 12"><path d="M4 0.5L7 4H1ZM4 11.5L7 8H1Z" fill="#ddd"/></svg>
<div class="t" style="left:754px;top:395px;color:#f0f0f0;letter-spacing:0.3px">不透明度:</div>
<div style="left:812px;top:392px;width:36px;height:19px;background:#383838;border:1px solid #333"></div>
<div class="t" style="left:815px;top:395px;color:#f0f0f0">100%</div>
<div style="left:848px;top:392px;width:19px;height:19px;background:#6e6e6e;border:1px solid #333;border-radius:2px"></div>
<svg style="position:absolute;left:854px;top:400px" width="7" height="4" viewBox="0 0 7 4"><path d="M0 0H7L3.5 4Z" fill="#eee"/></svg>
<svg style="position:absolute;left:701px;top:420px" width="14" height="17" viewBox="0 0 14 17"><path d="M1 16Q3.5 16 4.5 13Q5.5 10.5 8 11.5L14 2.5L12.5 1L6 9.5Q3 9.5 2.5 12.5Q2 15 1 16Z" fill="#d0d0d0"/></svg>
<svg style="position:absolute;left:718px;top:421px" width="15" height="15" viewBox="0 0 15 15"><path d="M7.5 1V14M1 7.5H14" stroke="#ccc" stroke-width="1.3"/><path d="M5 3.5L7.5 1L10 3.5M5 11.5L7.5 14L10 11.5M3.5 5L1 7.5L3.5 10M11.5 5L14 7.5L11.5 10" fill="none" stroke="#ccc" stroke-width="1.3"/></svg>
<svg style="position:absolute;left:741px;top:421px" width="13" height="15" viewBox="0 0 13 15"><path d="M3.5 7V4.5Q3.5 1.5 6.5 1.5Q9.5 1.5 9.5 4.5V7" fill="none" stroke="#bbb" stroke-width="1.6"/><rect x="2" y="7" width="9" height="7" fill="#bbb"/></svg>
<div class="t" style="left:778px;top:422px;color:#f0f0f0;letter-spacing:0.3px">填充:</div>
<div style="left:812px;top:420px;width:36px;height:19px;background:#383838;border:1px solid #333"></div>
<div class="t" style="left:815px;top:423px;color:#f0f0f0">100%</div>
<div style="left:848px;top:420px;width:19px;height:19px;background:#6e6e6e;border:1px solid #333;border-radius:2px"></div>
<svg style="position:absolute;left:854px;top:428px" width="7" height="4" viewBox="0 0 7 4"><path d="M0 0H7L3.5 4Z" fill="#eee"/></svg>
<div style="left:633px;top:442px;width:224px;height:193px;background:#4b4b4b"></div>
<div style="left:633px;top:445px;width:29px;height:36px;background:#535353"></div>
<div style="left:662px;top:445px;width:195px;height:36px;background:#56667b"></div>
<div style="left:633px;top:481px;width:224px;height:1px;background:#3c3c3c"></div>
<svg style="position:absolute;left:640px;top:458px" width="15" height="9" viewBox="0 0 15 9"><path d="M0.5 4.5Q7.5 -2.5 14.5 4.5Q7.5 11.5 0.5 4.5Z" fill="#a8a8a8"/><circle cx="7.5" cy="4.5" r="2.6" fill="#4a4a4a"/><circle cx="7" cy="4" r="0.9" fill="#ccc"/></svg>
<div style="left:664px;top:448px;width:36px;height:31px;background:#000"></div>
<svg style="position:absolute;left:663px;top:447px" width="38" height="33" viewBox="0 0 38 33"><path d="M1 6V1H7M31 1H37V6M37 27V32H31M7 32H1V27" fill="none" stroke="#eee" stroke-width="1.5"/></svg>
<div class="t" style="left:707px;top:457px;color:#f0f0f0">图层 0</div>
<div style="left:857px;top:442px;width:16px;height:193px;background:#464646;border-left:1px solid #3a3a3a"></div>
<div style="left:633px;top:635px;width:239px;height:21px;background:#535353;border-top:1px solid #3a3a3a"></div>
<div style="left:0px;top:656px;width:877px;height:4px;background:#4a4a4a;border-top:1px solid #333"></div>
<div style="left:371px;top:27px;width:235px;height:449px;background:#f0f0f0;border:1px solid #fbfbfb;border-top:none;box-shadow:-1px 0 0 rgba(0,0,0,.5),1px 1px 0 rgba(0,0,0,.5),2px 2px 2px rgba(0,0,0,.35)"></div>
<div style="left:371px;top:4px;width:57px;height:24px;border:3px solid #d83a3a;background:#2b2b2b"></div>
<div class="t" style="left:377px;top:10px;color:#f0f0f0">滤镜(T)</div>
<div class="t" style="left:393px;top:33px;color:#000;-webkit-text-stroke:0.08px #000">镜头光晕</div>
<div class="t" style="left:400px;top:33px;color:#000;text-align:right;width:187px;letter-spacing:0.45px;-webkit-text-stroke:0.08px #000">Ctrl+F</div>
<div style="left:376px;top:53px;width:226px;height:1px;background:#b9b9b9"></div>
<div style="left:376px;top:54px;width:226px;height:1px;background:#fff"></div>
<div class="t" style="left:393px;top:63px;color:#000;-webkit-text-stroke:0.08px #000">转换为智能滤镜</div>
<div style="left:376px;top:83px;width:226px;height:1px;background:#b9b9b9"></div>
<div style="left:376px;top:84px;width:226px;height:1px;background:#fff"></div>
<div class="t" style="left:393px;top:93px;color:#000;-webkit-text-stroke:0.08px #000">滤镜库(G)...</div>
<div class="t" style="left:393px;top:114px;color:#000;-webkit-text-stroke:0.08px #000">自适应广角(A)...</div>
<div class="t" style="left:400px;top:114px;color:#000;text-align:right;width:187px;letter-spacing:0.45px;-webkit-text-stroke:0.08px #000">Shift+Ctrl+A</div>
<div class="t" style="left:393px;top:135px;color:#000;-webkit-text-stroke:0.08px #000">镜头校正(R)...</div>
<div class="t" style="left:400px;top:135px;color:#000;text-align:right;width:187px;letter-spacing:0.45px;-webkit-text-stroke:0.08px #000">Shift+Ctrl+R</div>
<div class="t" style="left:393px;top:156px;color:#000;-webkit-text-stroke:0.08px #000">液化(L)...</div>
<div class="t" style="left:400px;top:156px;color:#000;text-align:right;width:187px;letter-spacing:0.45px;-webkit-text-stroke:0.08px #000">Shift+Ctrl+X</div>
<div class="t" style="left:393px;top:177px;color:#000;-webkit-text-stroke:0.08px #000">油画(O)...</div>
<div class="t" style="left:393px;top:198px;color:#000;-webkit-text-stroke:0.08px #000">消失点(V)...</div>
<div class="t" style="left:400px;top:198px;color:#000;text-align:right;width:187px;letter-spacing:0.45px;-webkit-text-stroke:0.08px #000">Alt+Ctrl+V</div>
<div style="left:376px;top:218px;width:226px;height:1px;background:#b9b9b9"></div>
<div style="left:376px;top:219px;width:226px;height:1px;background:#fff"></div>
<div class="t" style="left:393px;top:229px;color:#000;-webkit-text-stroke:0.08px #000">风格化</div>
<svg style="position:absolute;left:591px;top:229px" width="5" height="8"><path d="M0 0L5 4L0 8Z" fill="#111"/></svg>
<div class="t" style="left:393px;top:250px;color:#000;-webkit-text-stroke:0.08px #000">模糊</div>
<svg style="position:absolute;left:591px;top:250px" width="5" height="8"><path d="M0 0L5 4L0 8Z" fill="#111"/></svg>
<div class="t" style="left:393px;top:271px;color:#000;-webkit-text-stroke:0.08px #000">扭曲</div>
<svg style="position:absolute;left:591px;top:271px" width="5" height="8"><path d="M0 0L5 4L0 8Z" fill="#111"/></svg>
<div class="t" style="left:393px;top:292px;color:#000;-webkit-text-stroke:0.08px #000">锐化</div>
<svg style="position:absolute;left:591px;top:292px" width="5" height="8"><path d="M0 0L5 4L0 8Z" fill="#111"/></svg>
<div class="t" style="left:393px;top:313px;color:#000;-webkit-text-stroke:0.08px #000">视频</div>
<svg style="position:absolute;left:591px;top:313px" width="5" height="8"><path d="M0 0L5 4L0 8Z" fill="#111"/></svg>
<div class="t" style="left:393px;top:334px;color:#000;-webkit-text-stroke:0.08px #000">像素化</div>
<svg style="position:absolute;left:591px;top:334px" width="5" height="8"><path d="M0 0L5 4L0 8Z" fill="#111"/></svg>
<div style="left:374px;top:350px;width:231px;height:21px;background:#3496f4;border-top:1px solid #3a84d0;border-bottom:1px solid #3a84d0"></div>
<div style="left:378px;top:347px;width:56px;height:26px;border:3px solid #d23c44"></div>
<div class="t" style="left:393px;top:355px;color:#fff;-webkit-text-stroke:0.05px #fff">渲染</div>
<svg style="position:absolute;left:591px;top:355px" width="5" height="8"><path d="M0 0L5 4L0 8Z" fill="#fff"/></svg>
<div class="t" style="left:393px;top:376px;color:#000;-webkit-text-stroke:0.08px #000">杂色</div>
<svg style="position:absolute;left:591px;top:376px" width="5" height="8"><path d="M0 0L5 4L0 8Z" fill="#111"/></svg>
<div class="t" style="left:393px;top:397px;color:#000;-webkit-text-stroke:0.08px #000">其它</div>
<svg style="position:absolute;left:591px;top:397px" width="5" height="8"><path d="M0 0L5 4L0 8Z" fill="#111"/></svg>
<div style="left:376px;top:416px;width:226px;height:1px;background:#b9b9b9"></div>
<div style="left:376px;top:417px;width:226px;height:1px;background:#fff"></div>
<div class="t" style="left:393px;top:427px;color:#000;-webkit-text-stroke:0.08px #000"><span style="letter-spacing:0.6px">Digimarc</span></div>
<svg style="position:absolute;left:591px;top:427px" width="5" height="8"><path d="M0 0L5 4L0 8Z" fill="#111"/></svg>
<div style="left:376px;top:446px;width:226px;height:1px;background:#b9b9b9"></div>
<div style="left:376px;top:447px;width:226px;height:1px;background:#fff"></div>
<div class="t" style="left:393px;top:457px;color:#000;-webkit-text-stroke:0.08px #000">浏览联机滤镜...</div>
<div style="left:600px;top:347px;width:96px;height:111px;background:#f0f0f0;border:1px solid #fbfbfb;box-shadow:0 0 0 1px rgba(0,0,0,.45),2px 2px 2px rgba(0,0,0,.35)"></div>
<div class="t" style="left:622px;top:354px;color:#000;-webkit-text-stroke:0.08px #000">分层云彩</div>
<div class="t" style="left:622px;top:375px;color:#000;-webkit-text-stroke:0.08px #000">光照效果...</div>
<div style="left:603px;top:392px;width:88px;height:22px;background:#3496f4;border-top:1px solid #3a84d0;border-bottom:1px solid #3a84d0"></div>
<div style="left:599px;top:388px;width:96px;height:30px;border:3px solid #d23c44"></div>
<div class="t" style="left:622px;top:396px;color:#fff;-webkit-text-stroke:0.05px #fff">镜头光晕...</div>
<div class="t" style="left:622px;top:417px;color:#000;-webkit-text-stroke:0.08px #000">纤维...</div>
<div class="t" style="left:622px;top:438px;color:#000;-webkit-text-stroke:0.08px #000">云彩</div>
<div style="left:677px;top:600px;width:200px;height:60px;background:#fff"></div>
<svg style="position:absolute;left:682px;top:602px" width="64" height="56" viewBox="0 0 64 56"><path d="M57.1 17.4V13.3Q57.1 8.3 52.1 8.3H13.7Q8.7 8.3 8.7 13.3V43.2Q8.7 48.2 13.7 48.2H35.7" fill="none" stroke="#5ed22e" stroke-width="4.7"/><path d="M33 10L11.5 36" stroke="#333" stroke-width="3"/><rect x="54.8" y="27" width="4.7" height="5.8" fill="#3c3c3c"/><path d="M57.1 36V43.2Q57.1 48.2 52.1 48.2H40.3" fill="none" stroke="#3c3c3c" stroke-width="4.7"/></svg>
<div class="t" style="left:752px;top:609px;font-size:34px;line-height:34px;color:#444;letter-spacing:8px">爱纯净</div>
<div class="t" style="left:756px;top:642px;font-size:11px;line-height:11px;color:#6acb3a;font-weight:bold;letter-spacing:0.08px">www.aichunjing.com</div></body></html>
